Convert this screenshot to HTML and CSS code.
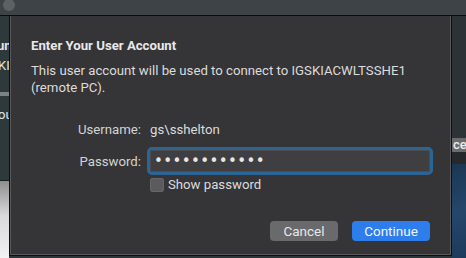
FILE: index.html
```html
<!DOCTYPE html>
<html>
<head>
<meta charset="utf-8">
<link rel="stylesheet" href="styles.css">
</head>
<body>
<div class="titlebar"><span class="light"></span></div>
<div class="stage">
  <div class="left-strip">
    <div class="ls-top">
      <span class="ls-text ls-bold">un</span>
      <span class="ls-text">KI</span>
      <span class="ls-bar"></span>
      <span class="ls-text ls-ou">ou</span>
    </div>
    <div class="ls-bottom"></div>
  </div>
  <div class="dialog">
    <h1 class="title">Enter Your User Account</h1>
    <p class="desc">This user account will be used to connect to IGSKIACWLTSSHE1 (remote PC).</p>
    <div class="form">
      <span class="label">Username:</span>
      <span class="value">gs\sshelton</span>
      <span class="label">Password:</span>
      <div class="field"><input class="pw" type="password" value="xxxxxxxxxxxx"></div>
      <label class="check"><span class="box"></span><span>Show password</span></label>
    </div>
    <div class="buttons">
      <button class="btn btn-cancel">Cancel</button>
      <button class="btn btn-primary">Continue</button>
    </div>
  </div>
  <div class="right-strip">
    <div class="rs-top"><span class="rs-btn">cel</span></div>
    <div class="rs-gap"></div>
    <div class="rs-bottom"></div>
  </div>
</div>
</body>
</html>
```
FILE: styles.css
```css
* { box-sizing: border-box; }
html, body { margin: 0; padding: 0; }
body {
  width: 466px;
  height: 258px;
  overflow: hidden;
  background: #2e3538;
  font-family: Roboto, "Liberation Sans", sans-serif;
  font-size: 13.2px;
  color: #dcdcdc;
}
.titlebar {
  height: 16px;
  background: #3d4346;
  border-bottom: 1px solid #0c0c0c;
  padding: 0 0 0 3px;
  overflow: hidden;
}
.light {
  display: block;
  width: 12px;
  height: 12px;
  border-radius: 50%;
  background: #5c6164;
  margin-top: -1px;
}
.stage {
  display: flex;
  height: 242px;
}
.left-strip {
  width: 9px;
  display: flex;
  flex-direction: column;
  overflow: hidden;
}
.ls-top {
  height: 165px;
  background: #2e393c;
  border-bottom: 1px solid #1a1f21;
  display: flex;
  flex-direction: column;
  padding-top: 21px;
  white-space: nowrap;
}
.ls-text {
  display: block;
  line-height: 17px;
  height: 17px;
  margin-left: -2px;
  color: #e4e6e6;
  font-size: 13px;
}
.ls-bold { font-weight: 700; margin-left: -3px; margin-bottom: 3px; }
.ls-bar {
  display: block;
  height: 4px;
  background: #7c8183;
  margin-top: 18px;
  margin-bottom: 10px;
}
.ls-ou { margin-left: -2px; }
.ls-bottom {
  flex: 1;
  background: linear-gradient(#8e8e8e, #d8d8d8 45%, #f2f2f2);
}
.dialog {
  width: 443px;
  height: 240px;
  background: #353437;
  border: 1px solid #0e0e0f;
  border-top: none;
  box-shadow: inset 1px 0 0 #59585b, inset -1px 0 0 #59585b, inset 0 -1px 0 #59585b;
  padding: 22px 21px 14px 21px;
  display: flex;
  flex-direction: column;
}
.title {
  margin: 0;
  font-size: 13.2px;
  line-height: 16px;
  font-weight: 700;
  color: #e9e9e9;
}
.desc {
  margin: 8px 0 0;
  line-height: 17px;
  color: #dcdcdc;
  width: 400px;
}
.form {
  margin-top: 25px;
  display: grid;
  grid-template-columns: 110px 286px;
  column-gap: 6px;
  row-gap: 9px;
  align-items: center;
}
.label {
  text-align: right;
  line-height: 17px;
  color: #d4d4d4;
}
.value {
  padding-left: 3px;
  line-height: 17px;
  color: #dcdcdc;
}
.field {
  height: 28px;
  border: 3px solid #2c6594;
  border-radius: 5px;
  background: #3f3e41;
  box-shadow: inset 0 0 0 1px #4c4b4e;
  display: flex;
  align-items: center;
}
.pw {
  width: 100%;
  height: 100%;
  border: 0;
  outline: none;
  background: transparent;
  color: #e6e6e6;
  font-family: "DejaVu Sans", sans-serif;
  font-size: 15px;
  letter-spacing: 0.4px;
  padding: 0 0 0 4px;
}
.check {
  grid-column: 2;
  margin-top: -6px;
  padding-left: 3px;
  display: flex;
  align-items: center;
  gap: 4px;
  line-height: 14px;
  color: #dcdcdc;
}
.box {
  width: 14px;
  height: 14px;
  border-radius: 3px;
  background: #5b5a5d;
  box-shadow: inset 0 0 0 1px #666568;
}
.buttons {
  margin-top: auto;
  display: flex;
  justify-content: flex-end;
  gap: 14px;
}
.btn {
  height: 20px;
  border: 0;
  border-radius: 4px;
  font-family: Roboto, "Liberation Sans", sans-serif;
  font-size: 13.5px;
  color: #e8e8e8;
  padding: 0;
}
.btn-cancel { width: 68px; background: #6a696c; }
.btn-primary { width: 78px; background: #2d7ded; color: #f2f6fc; }
.right-strip {
  width: 14px;
  display: flex;
  flex-direction: column;
  overflow: hidden;
}
.rs-top {
  height: 136px;
  background: #2c3235;
  display: flex;
  flex-direction: column;
  justify-content: flex-end;
}
.rs-btn {
  display: block;
  height: 14px;
  background: #6b6b6d;
  color: #ededed;
  line-height: 14px;
  white-space: nowrap;
  padding-left: 1px;
  font-size: 13px;
  font-weight: 500;
}
.rs-gap { height: 12px; background: #25292b; }
.rs-bottom {
  flex: 1;
  background: linear-gradient(160deg, #1c3652, #24476b 50%, #1d3a5a);
}
```
